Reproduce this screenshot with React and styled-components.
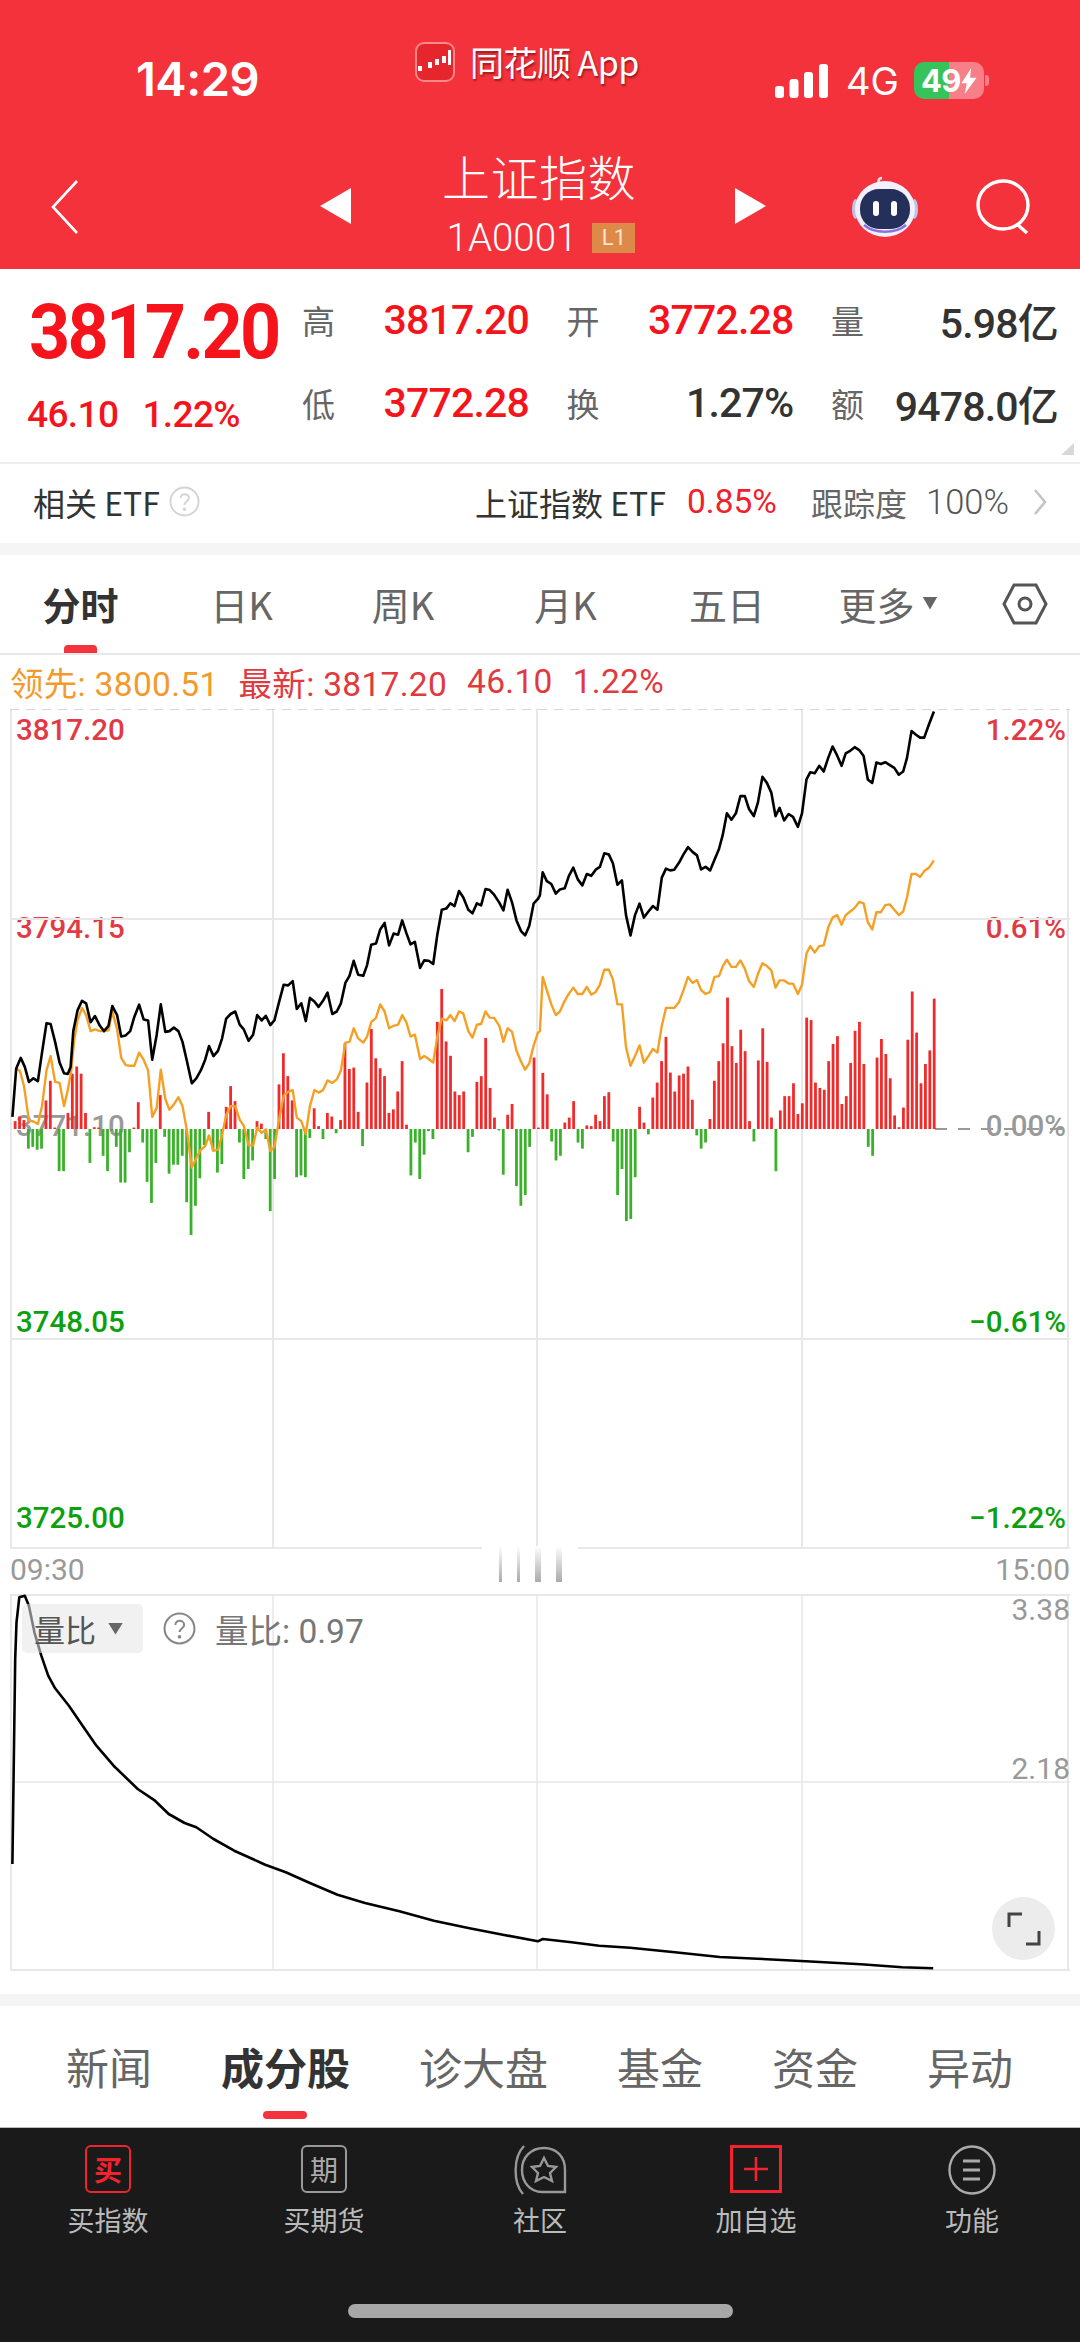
import styled, { createGlobalStyle } from "styled-components";

const SANS = `Roboto, "Noto Sans CJK SC", sans-serif`;
const CN = `"Noto Sans CJK SC", Roboto, sans-serif`;

// Traced from the reference. u = x * 2.904, v = (y - 700) * 2.8
const toPoints = (list) =>
  list.map(([u, v]) => `${(u / 2.904).toFixed(1)},${(700 + v / 2.8).toFixed(1)}`).join(" ");

const shiftRight = (list) => list.map(([u, v]) => [u + 1568, v]);

const PRICE_LEFT = [[36,1170],[47,1035],[60,1005],[72,1030],[84,1072],[97,1062],[110,1070],[122,990],[135,908],[147,910],[160,960],[173,1018],[186,1048],[197,1050],[205,1030],[213,930],[225,872],[238,845],[250,852],[263,905],[276,888],[290,915],[302,930],[315,915],[326,860],[340,885],[352,945],[365,942],[378,930],[390,890],[404,856],[417,897],[430,900],[442,1010],[455,940],[467,855],[480,932],[492,930],[505,920],[518,930],[530,960],[543,1015],[557,1076],[570,1062],[583,1040],[596,1010],[607,972],[620,1000],[633,985],[645,950],[657,895],[670,882],[683,875],[696,912],[708,925],[722,957],[735,940],[747,885],[760,900],[772,887],[785,913],[797,900],[810,850],[824,800],[837,802],[850,790],[862,868],[875,852],[888,902],[900,837],[913,847],[925,862],[938,845],[951,822],[965,882],[978,875],[990,852],[1003,795],[1015,775],[1027,733],[1040,772],[1055,775],[1066,745],[1078,688],[1092,685],[1104,645],[1117,627],[1130,690],[1143,657],[1156,660],[1168,620],[1180,655],[1192,687],[1205,680],[1220,753],[1232,732],[1245,733],[1258,742],[1270,660],[1283,590],[1296,587],[1308,572],[1320,580],[1333,538],[1345,555],[1360,590],[1372,600],[1385,572],[1397,578],[1410,532],[1422,535],[1435,548],[1450,570],[1462,592],[1474,534],[1487,570],[1500,620],[1513,650],[1525,662],[1537,635],[1550,572],[1562,560]];
const PRICE_RIGHT = [[0,550],[8,485],[20,510],[33,518],[46,545],[58,533],[72,530],[84,495],[97,472],[110,505],[123,522],[136,490],[149,495],[162,478],[174,470],[187,432],[200,435],[212,460],[225,520],[238,508],[250,605],[263,662],[276,605],[289,573],[302,612],[315,595],[328,580],[341,590],[354,500],[366,475],[378,480],[390,478],[404,458],[417,435],[430,415],[443,428],[456,438],[468,477],[481,470],[494,480],[507,450],[520,420],[531,380],[543,320],[556,338],[569,320],[582,272],[595,272],[607,308],[621,328],[633,290],[646,218],[659,235],[672,262],[684,328],[696,305],[709,340],[722,322],[735,330],[749,358],[761,320],[774,225],[785,205],[798,208],[811,187],[824,203],[837,165],[850,133],[863,158],[876,187],[888,152],[901,145],[914,135],[927,143],[940,160],[952,225],[965,235],[977,178],[990,182],[1003,177],[1016,185],[1029,193],[1042,212],[1055,203],[1066,165],[1079,90],[1092,100],[1104,108],[1116,108],[1130,70],[1144,35]];
const AVG_LEFT = [[47,1035],[58,1042],[70,1085],[84,1180],[97,1183],[110,1190],[122,1140],[135,1040],[147,1000],[160,1072],[173,1075],[186,1140],[197,1095],[207,1040],[215,960],[225,900],[238,865],[250,885],[263,930],[276,925],[290,930],[302,930],[315,928],[326,875],[340,925],[352,1005],[365,1025],[378,1027],[390,1027],[404,990],[417,1010],[430,1040],[442,1170],[455,1145],[467,1038],[480,1120],[492,1150],[505,1135],[518,1115],[530,1140],[543,1210],[557,1312],[570,1285],[583,1262],[596,1252],[607,1222],[620,1265],[633,1262],[645,1220],[657,1165],[670,1140],[683,1140],[696,1178],[708,1195],[722,1250],[735,1250],[747,1200],[760,1215],[772,1205],[785,1265],[797,1255],[810,1180],[824,1110],[837,1100],[850,1095],[862,1172],[875,1182],[888,1218],[900,1140],[913,1095],[925,1102],[938,1095],[951,1068],[965,1075],[978,1065],[990,1040],[1003,962],[1015,960],[1027,922],[1040,950],[1055,962],[1066,945],[1078,905],[1092,893],[1104,855],[1117,875],[1130,922],[1143,915],[1156,912],[1168,885],[1180,905],[1192,945],[1205,940],[1220,1008],[1232,1000],[1245,1008],[1258,1018],[1270,945],[1283,895],[1296,900],[1308,885],[1320,902],[1333,875],[1345,880],[1360,930],[1372,948],[1385,912],[1397,910],[1410,875],[1422,892],[1435,893],[1450,915],[1462,960],[1474,922],[1487,932],[1500,985],[1513,1015],[1525,1038],[1537,1020],[1550,970],[1562,935]];
const AVG_RIGHT = [[0,930],[8,778],[20,815],[33,855],[46,885],[58,875],[72,845],[84,825],[97,808],[110,826],[123,826],[136,806],[149,828],[162,820],[174,800],[187,758],[200,758],[212,785],[225,855],[238,855],[250,975],[263,1027],[276,1000],[289,970],[302,1018],[315,1000],[328,980],[341,990],[354,915],[366,865],[378,865],[390,865],[404,848],[417,815],[430,778],[443,795],[456,787],[468,815],[481,826],[494,820],[507,778],[520,776],[531,748],[543,730],[556,750],[569,750],[582,732],[595,755],[607,790],[621,806],[633,770],[646,740],[659,748],[672,760],[684,808],[696,788],[709,788],[722,797],[735,797],[749,826],[761,800],[774,712],[785,692],[798,710],[811,692],[824,690],[837,640],[850,612],[863,605],[876,632],[888,605],[901,595],[914,585],[927,568],[940,572],[952,625],[965,645],[977,597],[990,597],[1003,577],[1016,575],[1029,590],[1042,605],[1055,595],[1066,555],[1079,490],[1092,490],[1104,498],[1116,482],[1130,472],[1144,452]];

// signed bar heights, one per minute, + is red and - is green
const BARS = [22,35,25,-55,-50,-58,-55,80,135,3,-118,-118,45,155,175,155,45,-95,5,3,-75,-118,-3,-50,-150,-150,-65,3,75,-38,-148,-207,-95,95,-22,-125,-100,-100,-75,-205,-297,-215,-138,-45,48,-60,-122,-98,62,120,78,-38,-140,-112,-88,22,15,-28,-230,-140,125,212,148,80,-135,-130,-135,-25,58,8,-28,45,35,-12,25,240,168,172,48,-48,130,280,198,170,148,45,55,105,190,12,-130,-38,-140,-72,-6,-28,300,392,245,205,105,95,105,-65,-22,132,148,255,115,32,-4,-128,40,70,-160,-215,-185,-50,200,4,157,97,-35,-88,-75,18,32,78,-38,-55,10,8,40,22,92,103,-35,-185,-112,-258,-252,-135,62,18,-15,88,130,190,258,158,105,150,155,175,82,-18,-55,-38,28,135,190,240,368,232,185,278,218,22,-35,192,282,188,32,-118,52,92,92,128,42,72,312,305,130,115,110,190,238,260,70,92,185,275,300,182,-50,-75,200,252,210,142,38,5,60,250,385,270,128,182,220,365];

const RATIO = [[18,1095],[22,480],[24,370],[28,295],[36,290],[42,320],[50,400],[60,470],[70,530],[80,568],[100,620],[120,680],[140,740],[165,800],[200,870],[225,905],[245,945],[268,972],[285,985],[310,1020],[340,1055],[385,1097],[415,1120],[450,1152],[490,1187],[530,1212],[580,1237],[630,1265],[680,1287],[730,1307],[781,1327],[788,1320],[830,1330],[870,1340],[915,1346],[980,1360],[1045,1374],[1100,1379],[1170,1387],[1250,1396],[1310,1405],[1355,1408]];

const ratioPoints = RATIO.map(([x, y]) => `${(x / 1.452).toFixed(1)},${(1500 + y / 3).toFixed(1)}`).join(" ");

const CHART_TABS = ["分时", "日K", "周K", "月K", "五日"];
const NEWS_TABS = ["新闻", "成分股", "诊大盘", "基金", "资金", "异动"];

const BackIcon = () => (
  <svg width="27" height="54" viewBox="0 0 27 54" fill="none" stroke="#fff" strokeWidth="2.6">
    <path d="M26 1 2 27l24 26" />
  </svg>
);

const SearchIcon = () => (
  <svg width="56" height="56" viewBox="0 0 56 56" fill="none" stroke="#fff" strokeWidth="3.4">
    <ellipse cx="27" cy="26" rx="25" ry="24" />
    <path d="m42 46 9 8" />
  </svg>
);

const RobotIcon = () => (
  <svg width="66" height="62" viewBox="0 0 66 62">
    <path d="M29 9c-4-2-3-7 1-7" fill="none" stroke="#e4e1f5" strokeWidth="2.4" />
    <ellipse cx="3.5" cy="33" rx="3.5" ry="10" fill="#bfc2ea" />
    <ellipse cx="62.5" cy="33" rx="3.5" ry="10" fill="#bfc2ea" />
    <ellipse cx="33" cy="33" rx="30" ry="28" fill="#f1f0fb" />
    <rect x="8" y="13" width="50" height="40" rx="19" fill="#25305a" />
    <path d="M12 49c10 9 32 9 42 0" fill="none" stroke="#8a72e0" strokeWidth="2.4" />
    <rect x="21" y="25" width="6" height="15" rx="3" fill="#fff" />
    <rect x="39" y="25" width="6" height="15" rx="3" fill="#fff" />
  </svg>
);

const AppLogo = () => (
  <svg width="40" height="40" viewBox="0 0 40 40">
    <rect x="1" y="1" width="38" height="38" rx="8" fill="#e5262d" stroke="#f88" strokeWidth="2" />
    <g fill="#fff">
      <rect x="3" y="24" width="4" height="5" />
      <rect x="13" y="20" width="4" height="6" />
      <rect x="20" y="17" width="4" height="6" />
      <rect x="27" y="14" width="4" height="7" />
      <rect x="33" y="8" width="3" height="15" />
    </g>
  </svg>
);

const SignalIcon = () => (
  <svg width="53" height="34" viewBox="0 0 53 34" fill="#fff">
    <rect x="0" y="22" width="9" height="12" rx="3" />
    <rect x="14.500" y="15" width="9" height="19" rx="3" />
    <rect x="29" y="8" width="9" height="26" rx="3" />
    <rect x="44" y="0" width="9" height="34" rx="3" />
  </svg>
);

const BoltIcon = () => (
  <svg width="16" height="26" viewBox="0 0 14 24" fill="#fff">
    <path d="M9 0 0 14h5l-2 10 11-15H8z" />
  </svg>
);

const HelpIcon = ({ size, color }) => (
  <svg width={size} height={size} viewBox="0 0 32 32" fill="none" stroke={color} strokeWidth="2">
    <circle cx="16" cy="16" r="14.500" />
    <path d="M12 12.500c0-5.500 8.500-5 8.500 0 0 3.500-4.500 3.500-4.500 7" />
    <circle cx="16" cy="24" r="0.800" fill={color} />
  </svg>
);

const HexIcon = () => (
  <svg width="46" height="42" viewBox="0 0 46 42" fill="none" stroke="#555" strokeWidth="3">
    <path d="M12 2h22l10 19-10 19H12L2 21z" />
    <circle cx="23" cy="21" r="6" />
  </svg>
);

const CommunityIcon = () => (
  <svg width="56" height="50" viewBox="0 0 56 50" fill="none" stroke="#999" strokeWidth="2.4">
    <path d="M11 49C1 38 1 12 12 1" />
    <path d="M53 47H30C18 47 10 37 10 25 10 12 19 3 32 3s21 9 21 22z" />
    <path d="m32 13 4 8 8 1-6 6 2 8-8-4-8 4 2-8-6-6 8-1z" />
  </svg>
);

const PlusIcon = () => (
  <svg width="52" height="48" viewBox="0 0 52 48" fill="none" stroke="#f0232e">
    <rect x="1.500" y="1.500" width="49" height="45" strokeWidth="3" />
    <path d="M26 12v24M14 24h24" strokeWidth="2.6" />
  </svg>
);

const MenuIcon = () => (
  <svg width="48" height="50" viewBox="0 0 48 50" fill="none" stroke="#aaa">
    <ellipse cx="24" cy="25" rx="22.500" ry="23.500" strokeWidth="2.4" />
    <path d="M15 16h17M15 25h17M15 34h17" strokeWidth="3" />
  </svg>
);

const ExpandIcon = () => (
  <svg width="34" height="34" viewBox="0 0 34 34" fill="none" stroke="#444" strokeWidth="3">
    <path d="M2 15V2h13M32 19v13H19" />
  </svg>
);

const PriceChart = () => (
  <ChartSvg width="1060" height="840" viewBox="10 710 1060 840">
    <g stroke="#e8e8e8" strokeWidth="2">
      <path d="M11 710v839M1068 710v839M10 1549h1060" />
      <path d="M273 710v839M537 710v839M802 710v839M10 920h1060M10 1340h1060" />
    </g>
    <path d="M10 710h1060" stroke="#c9c9c9" strokeWidth="1.500" strokeDasharray="9 7" />
    <path d="M935 1130h135" stroke="#999" strokeWidth="2" strokeDasharray="12 11" />
    {BARS.map((h, i) => {
      const x = (44 + 12.77 * i) / 2.904;
      const len = Math.max(Math.abs(h), 4) / 2.8;
      return (
        <rect
          key={i}
          x={x - 1.4}
          y={h > 0 ? 1130 - len : 1130}
          width="2.800"
          height={len}
          fill={h > 0 ? "#f02b2b" : "#3bb02b"}
        />
      );
    })}
    <polyline
      points={toPoints([...AVG_LEFT, ...shiftRight(AVG_RIGHT)])}
      fill="none"
      stroke="#f5a024"
      strokeWidth="2.400"
      strokeLinejoin="round"
    />
    <polyline
      points={toPoints([...PRICE_LEFT, ...shiftRight(PRICE_RIGHT)])}
      fill="none"
      stroke="#000"
      strokeWidth="2.600"
      strokeLinejoin="round"
    />
  </ChartSvg>
);

const RatioChart = () => (
  <ChartSvg width="1060" height="377" viewBox="10 1595 1060 377">
    <g stroke="#e8e8e8" strokeWidth="2">
      <path d="M11 1595v376M1068 1595v376M10 1596h1060M10 1971h1060" />
      <path d="M273 1595v376M537 1595v376M802 1595v376M10 1783h1060" strokeWidth="1.500" />
    </g>
    <polyline points={ratioPoints} fill="none" stroke="#000" strokeWidth="2.600" strokeLinejoin="round" />
  </ChartSvg>
);

const App = () => {
  return (
    <>
      <GlobalStyle />
      <Page>
        <Header>
          <StatusBar>
            <Clock>14:29</Clock>
            <AppBadge>
              <AppLogo />
              <AppName>同花顺 App</AppName>
            </AppBadge>
            <StatusRight>
              <SignalIcon />
              <Network>4G</Network>
              <Battery>
                49
                <BoltIcon />
              </Battery>
            </StatusRight>
          </StatusBar>
          <NavBar>
            <BackSlot>
              <BackIcon />
            </BackSlot>
            <Arrow />
            <TitleBlock>
              <Title>上证指数</Title>
              <CodeRow>
                <Code>1A0001</Code>
                <LevelTag>L1</LevelTag>
              </CodeRow>
            </TitleBlock>
            <Arrow $right />
            <RobotSlot>
              <RobotIcon />
            </RobotSlot>
            <SearchSlot>
              <SearchIcon />
            </SearchSlot>
          </NavBar>
        </Header>

        <Quote>
          <QuoteMain>
            <BigPrice>3817.20</BigPrice>
            <ChangeRow>
              <span>46.10</span>
              <span>1.22%</span>
            </ChangeRow>
          </QuoteMain>
          <StatGrid>
            <Stat>
              <StatLabel>高</StatLabel>
              <StatValue $red>3817.20</StatValue>
            </Stat>
            <Stat>
              <StatLabel>开</StatLabel>
              <StatValue $red>3772.28</StatValue>
            </Stat>
            <Stat>
              <StatLabel>量</StatLabel>
              <StatValue>5.98亿</StatValue>
            </Stat>
            <Stat>
              <StatLabel>低</StatLabel>
              <StatValue $red>3772.28</StatValue>
            </Stat>
            <Stat>
              <StatLabel>换</StatLabel>
              <StatValue>1.27%</StatValue>
            </Stat>
            <Stat>
              <StatLabel>额</StatLabel>
              <StatValue>9478.0亿</StatValue>
            </Stat>
          </StatGrid>
          <CornerMark />
        </Quote>

        <EtfRow>
          <EtfLabel>相关 ETF</EtfLabel>
          <HelpIcon size={31} color="#d4d4d4" />
          <EtfName>上证指数 ETF</EtfName>
          <EtfRate>0.85%</EtfRate>
          <EtfTrack>跟踪度</EtfTrack>
          <EtfTrackValue>100%</EtfTrackValue>
          <EtfChevron>
            <svg width="14" height="26" viewBox="0 0 14 26" fill="none" stroke="#c4c4c4" strokeWidth="2.600">
              <path d="m2 1 10 12L2 25" />
            </svg>
          </EtfChevron>
        </EtfRow>
        <Band />

        <ChartTabs>
          {CHART_TABS.map((tab, i) => (
            <ChartTab key={tab} $active={i === 0}>
              {tab}
            </ChartTab>
          ))}
          <ChartTab>
            更多
            <MoreCaret />
          </ChartTab>
          <HexSlot>
            <HexIcon />
          </HexSlot>
        </ChartTabs>

        <Legend>
          <LegendItem $orange>领先: 3800.51</LegendItem>
          <LegendItem>最新: 3817.20</LegendItem>
          <LegendItem>46.10</LegendItem>
          <LegendItem>1.22%</LegendItem>
        </Legend>

        <PricePanel>
          <AxisLabel $top={3} $color="#e23a44">3817.20</AxisLabel>
          <AxisLabel $top={201} $color="#e23a44">3794.15</AxisLabel>
          <AxisLabel $top={399} $color="#999">3771.10</AxisLabel>
          <AxisLabel $top={595} $color="#0ca10c">3748.05</AxisLabel>
          <AxisLabel $top={791} $color="#0ca10c">3725.00</AxisLabel>
          <AxisLabel $top={3} $right $color="#e23a44">1.22%</AxisLabel>
          <AxisLabel $top={201} $right $color="#e23a44">0.61%</AxisLabel>
          <AxisLabel $top={399} $right $color="#999">0.00%</AxisLabel>
          <AxisLabel $top={595} $right $color="#0ca10c">−0.61%</AxisLabel>
          <AxisLabel $top={791} $right $color="#0ca10c">−1.22%</AxisLabel>
          <PriceChart />
        </PricePanel>

        <TimeRow>
          <TimeText>09:30</TimeText>
          <Grip>
            <GripBar $w={3} />
            <GripBar $w={3} />
            <GripBar $w={6} />
            <GripBar $w={6} />
          </Grip>
          <TimeText>15:00</TimeText>
        </TimeRow>

        <RatioPanel>
          <RatioChart />
          <RatioTools>
            <RatioSelect>
              量比
              <RatioCaret />
            </RatioSelect>
            <HelpIcon size={33} color="#888" />
            <RatioValue>量比: 0.97</RatioValue>
          </RatioTools>
          <RatioAxis $top={-2}>3.38</RatioAxis>
          <RatioAxis $top={157}>2.18</RatioAxis>
          <ExpandButton>
            <ExpandIcon />
          </ExpandButton>
        </RatioPanel>
        <Band $top={24} />

        <NewsTabs>
          {NEWS_TABS.map((tab) => (
            <NewsTab key={tab} $active={tab === "成分股"}>
              {tab}
            </NewsTab>
          ))}
        </NewsTabs>

        <Footer>
          <FooterNav>
            <FooterItem>
              <BoxIcon $red>买</BoxIcon>
              <FooterLabel>买指数</FooterLabel>
            </FooterItem>
            <FooterItem>
              <BoxIcon>期</BoxIcon>
              <FooterLabel>买期货</FooterLabel>
            </FooterItem>
            <FooterItem>
              <CommunityIcon />
              <FooterLabel>社区</FooterLabel>
            </FooterItem>
            <FooterItem>
              <PlusIcon />
              <FooterLabel>加自选</FooterLabel>
            </FooterItem>
            <FooterItem>
              <MenuIcon />
              <FooterLabel>功能</FooterLabel>
            </FooterItem>
          </FooterNav>
          <HomeBar />
        </Footer>
      </Page>
    </>
  );
};

export default App;

const GlobalStyle = createGlobalStyle`
  html, body {
    margin: 0;
    padding: 0;
    background: #fff;
  }
  * {
    box-sizing: border-box;
  }
`;

const Page = styled.div`
  width: 1080px;
  height: 2342px;
  overflow: hidden;
  display: flex;
  flex-direction: column;
  font-family: ${SANS};
  background: #fff;
`;

const Header = styled.header`
  height: 269px;
  background: #f3323c;
  color: #fff;
`;

const StatusBar = styled.div`
  height: 125px;
  display: flex;
  align-items: flex-start;
  padding-left: 136px;
`;

const Clock = styled.div`
  width: 122px;
  margin-top: 54px;
  font-family: Inter, sans-serif;
  font-size: 47px;
  line-height: 50px;
  font-weight: 600;
  letter-spacing: -0.5px;
  white-space: nowrap;
`;

const AppBadge = styled.div`
  display: flex;
  align-items: center;
  gap: 15px;
  margin: 42px 0 0 157px;
`;

const AppName = styled.div`
  font-family: ${CN};
  font-size: 34px;
  line-height: 40px;
  letter-spacing: -0.5px;
  text-shadow: 1px 2px 2px rgba(90, 0, 0, 0.55);
`;

const StatusRight = styled.div`
  display: flex;
  align-items: center;
  margin: 62px 0 0 136px;
`;

const Network = styled.div`
  width: 68px;
  margin-left: 18px;
  font-size: 38px;
  line-height: 36px;
  font-family: Inter, sans-serif;
`;

const Battery = styled.div`
  position: relative;
  width: 70px;
  height: 37px;
  border-radius: 10px;
  display: flex;
  align-items: center;
  justify-content: center;
  font-family: Inter, sans-serif;
  font-size: 31px;
  font-weight: 700;
  letter-spacing: -0.5px;
  background: linear-gradient(90deg, #35c35a 0 50%, #f77f87 50% 100%);

  &::after {
    content: "";
    position: absolute;
    right: -5px;
    top: 13px;
    width: 4px;
    height: 11px;
    border-radius: 0 3px 3px 0;
    background: #f77f87;
  }
`;

const NavBar = styled.div`
  height: 144px;
  display: flex;
  align-items: flex-start;
`;

const BackSlot = styled.div`
  width: 320px;
  padding: 55px 0 0 51px;
`;

const Arrow = styled.div`
  width: 31px;
  height: 36px;
  margin-top: 63px;
  background: #fff;
  clip-path: ${(p) =>
    p.$right ? "polygon(0 0, 100% 50%, 0 100%)" : "polygon(100% 0, 0 50%, 100% 100%)"};
`;

const TitleBlock = styled.div`
  width: 384px;
  padding: 22px 8px 0 0;
  display: flex;
  flex-direction: column;
  align-items: center;
`;

const Title = styled.div`
  font-family: ${CN};
  font-size: 48px;
  line-height: 56px;
  font-weight: 300;
  letter-spacing: 0.5px;
`;

const CodeRow = styled.div`
  display: flex;
  align-items: center;
  gap: 15px;
  height: 38px;
  margin-top: 16px;
  padding-left: 4px;
`;

const Code = styled.div`
  font-size: 38.500px;
  font-weight: 300;
  line-height: 38px;
`;

const LevelTag = styled.div`
  width: 43px;
  height: 30px;
  background: #dd8a48;
  color: #f6e5cf;
  font-size: 22px;
  line-height: 30px;
  text-align: center;
`;

const RobotSlot = styled.div`
  margin: 51px 0 0 86px;
`;

const SearchSlot = styled.div`
  margin: 54px 0 0 58px;
`;

const Quote = styled.section`
  position: relative;
  height: 193px;
  display: flex;
  padding-left: 29px;
`;

const QuoteMain = styled.div`
  width: 273px;
`;

const BigPrice = styled.div`
  margin-top: 20px;
  font-size: 76px;
  line-height: 86px;
  font-weight: 700;
  letter-spacing: -2.8px;
  color: #f5141c;
  transform: scaleX(0.945);
  transform-origin: left center;
`;

const ChangeRow = styled.div`
  display: flex;
  gap: 24px;
  margin: 18px 0 0 -2px;
  font-size: 37px;
  line-height: 44px;
  font-weight: 500;
  letter-spacing: -0.6px;
  color: #f5141c;
`;

const StatGrid = styled.div`
  width: 756px;
  display: grid;
  grid-template-columns: repeat(3, 227px);
  justify-content: space-between;
  grid-auto-rows: 83px;
  padding-top: 25px;
`;

const Stat = styled.div`
  display: flex;
  align-items: center;
  justify-content: space-between;
  height: 52px;
`;

const StatLabel = styled.span`
  font-family: ${CN};
  font-size: 33px;
  color: #666;
`;

const StatValue = styled.span`
  font-family: ${SANS};
  font-size: 41px;
  font-weight: 500;
  letter-spacing: -0.8px;
  color: ${(p) => (p.$red ? "#f5141c" : "#333")};
`;

const CornerMark = styled.div`
  position: absolute;
  right: 6px;
  bottom: 7px;
  width: 13px;
  height: 12px;
  background: #d8d8d8;
  clip-path: polygon(100% 0, 100% 100%, 0 100%);
`;

const EtfRow = styled.section`
  height: 81px;
  display: flex;
  align-items: center;
  padding: 0 0 4px 33px;
  border-top: 2px solid #eee;
  font-family: ${CN};
  font-size: 32px;
  color: #333;
`;

const EtfLabel = styled.span`
  width: 136px;
  white-space: nowrap;
`;

const EtfName = styled.span`
  margin-left: 275px;
  width: 212px;
  white-space: nowrap;
`;

const EtfRate = styled.span`
  width: 124px;
  font-family: ${SANS};
  font-size: 33.500px;
  color: #f0222c;
`;

const EtfTrack = styled.span`
  width: 115px;
  color: #666;
`;

const EtfTrackValue = styled.span`
  width: 107px;
  font-family: ${SANS};
  font-size: 34.500px;
  font-weight: 300;
  color: #555;
`;

const EtfChevron = styled.span`
  display: flex;
`;

const Band = styled.div`
  height: 12px;
  background: #f5f5f5;
  flex: none;
  margin-top: ${(p) => p.$top || 0}px;
`;

const ChartTabs = styled.nav`
  height: 100px;
  display: grid;
  grid-template-columns: 161px 161px 162px 163px 160px 162px 1fr;
  align-items: center;
  border-bottom: 2px solid #e8e8e8;
`;

const ChartTab = styled.div`
  position: relative;
  height: 100%;
  padding-bottom: 2px;
  display: flex;
  align-items: center;
  justify-content: center;
  font-family: ${CN};
  font-size: 38px;
  font-weight: ${(p) => (p.$active ? 700 : 400)};
  color: ${(p) => (p.$active ? "#333" : "#666")};

  &::after {
    content: "";
    display: ${(p) => (p.$active ? "block" : "none")};
    position: absolute;
    bottom: 0;
    left: 64px;
    width: 33px;
    height: 8px;
    border-radius: 4px 4px 0 0;
    background: #f5333f;
  }
`;

const MoreCaret = styled.i`
  width: 15px;
  height: 13px;
  margin-left: 8px;
  background: #666;
  clip-path: polygon(0 0, 100% 0, 50% 100%);
`;

const HexSlot = styled.div`
  display: flex;
  justify-content: center;
  padding-left: 1px;
`;

const Legend = styled.div`
  height: 54px;
  display: flex;
  align-items: center;
  gap: 20px;
  padding: 0 0 2px 10px;
  font-size: 33.500px;
  letter-spacing: 0.3px;
`;

const LegendItem = styled.span`
  font-family: ${SANS};
  color: ${(p) => (p.$orange ? "#f39a2c" : "#e03a3f")};
`;

const PricePanel = styled.div`
  position: relative;
  flex: none;
  width: 1060px;
  height: 840px;
  margin-left: 10px;
`;

const ChartSvg = styled.svg`
  display: block;
  position: absolute;
  left: 0;
  top: 0;
`;

const AxisLabel = styled.span`
  position: absolute;
  top: ${(p) => p.$top}px;
  ${(p) => (p.$right ? "right: 4px;" : "left: 6px;")}
  font-size: 29.500px;
  line-height: 36px;
  font-weight: 500;
  color: ${(p) => p.$color};
`;

const TimeRow = styled.div`
  position: relative;
  flex: none;
  height: 45px;
  display: flex;
  align-items: center;
  justify-content: space-between;
  padding: 0 10px 4px 10px;
`;

const TimeText = styled.span`
  font-size: 30px;
  font-weight: 400;
  color: #999;
`;

const Grip = styled.div`
  position: absolute;
  left: 482px;
  top: -3px;
  width: 96px;
  height: 36px;
  background: #fff;
  display: flex;
  justify-content: center;
  gap: 15px;
`;

const GripBar = styled.i`
  width: ${(p) => p.$w}px;
  height: 100%;
  background: linear-gradient(180deg, #fff, #aaa);
`;

const RatioPanel = styled.div`
  position: relative;
  flex: none;
  width: 1060px;
  height: 376px;
  margin-left: 10px;
`;

const RatioTools = styled.div`
  position: absolute;
  left: 12px;
  top: 10px;
  display: flex;
  align-items: center;
  gap: 20px;
`;

const RatioSelect = styled.div`
  width: 121px;
  height: 49px;
  display: flex;
  align-items: center;
  padding-left: 12px;
  gap: 12px;
  border-radius: 5px;
  background: rgba(230, 230, 230, 0.55);
  font-family: ${CN};
  font-size: 31px;
  color: #555;
`;

const RatioCaret = styled.i`
  width: 15px;
  height: 12px;
  background: #666;
  clip-path: polygon(0 0, 100% 0, 50% 100%);
`;

const RatioValue = styled.span`
  font-family: ${SANS};
  font-size: 33.500px;
  color: #777;
  margin-left: -1px;
`;

const RatioAxis = styled.span`
  position: absolute;
  right: 0;
  top: ${(p) => p.$top}px;
  font-size: 30px;
  line-height: 36px;
  color: #999;
`;

const ExpandButton = styled.div`
  position: absolute;
  left: 982px;
  top: 303px;
  width: 63px;
  height: 63px;
  border-radius: 50%;
  background: #ececec;
  display: flex;
  align-items: center;
  justify-content: center;
`;

const NewsTabs = styled.nav`
  flex: none;
  height: 121px;
  display: flex;
  gap: 69px;
  padding: 0 0 2px 66px;
`;

const NewsTab = styled.div`
  position: relative;
  height: 100%;
  display: flex;
  align-items: center;
  font-family: ${CN};
  font-size: 43px;
  font-weight: ${(p) => (p.$active ? 700 : 400)};
  color: ${(p) => (p.$active ? "#333" : "#666")};

  &::after {
    content: "";
    display: ${(p) => (p.$active ? "block" : "none")};
    position: absolute;
    bottom: 6px;
    left: 42px;
    width: 44px;
    height: 8px;
    border-radius: 4px;
    background: #f5333f;
  }
`;

const Footer = styled.footer`
  flex: 1;
  background: #1a1a1a;
  border-top: 1px solid #bbb;
  display: flex;
  flex-direction: column;
`;

const FooterNav = styled.div`
  display: grid;
  grid-template-columns: repeat(5, 216px);
  padding-top: 17px;
`;

const FooterItem = styled.div`
  height: 93px;
  display: flex;
  flex-direction: column;
  align-items: center;
  justify-content: space-between;
`;

const BoxIcon = styled.div`
  width: 46px;
  height: 48px;
  border-radius: 6px;
  border: 2px solid ${(p) => (p.$red ? "#f0232e" : "#999")};
  display: flex;
  align-items: center;
  justify-content: center;
  font-family: ${CN};
  font-size: 28px;
  font-weight: ${(p) => (p.$red ? 700 : 400)};
  color: ${(p) => (p.$red ? "#f0232e" : "#aaa")};
`;

const FooterLabel = styled.div`
  font-family: ${CN};
  font-size: 27px;
  line-height: 36px;
  color: #bbb;
`;

const HomeBar = styled.div`
  width: 385px;
  height: 14px;
  margin: 66px auto 0;
  border-radius: 7px;
  background: #a8a8a8;
`;
